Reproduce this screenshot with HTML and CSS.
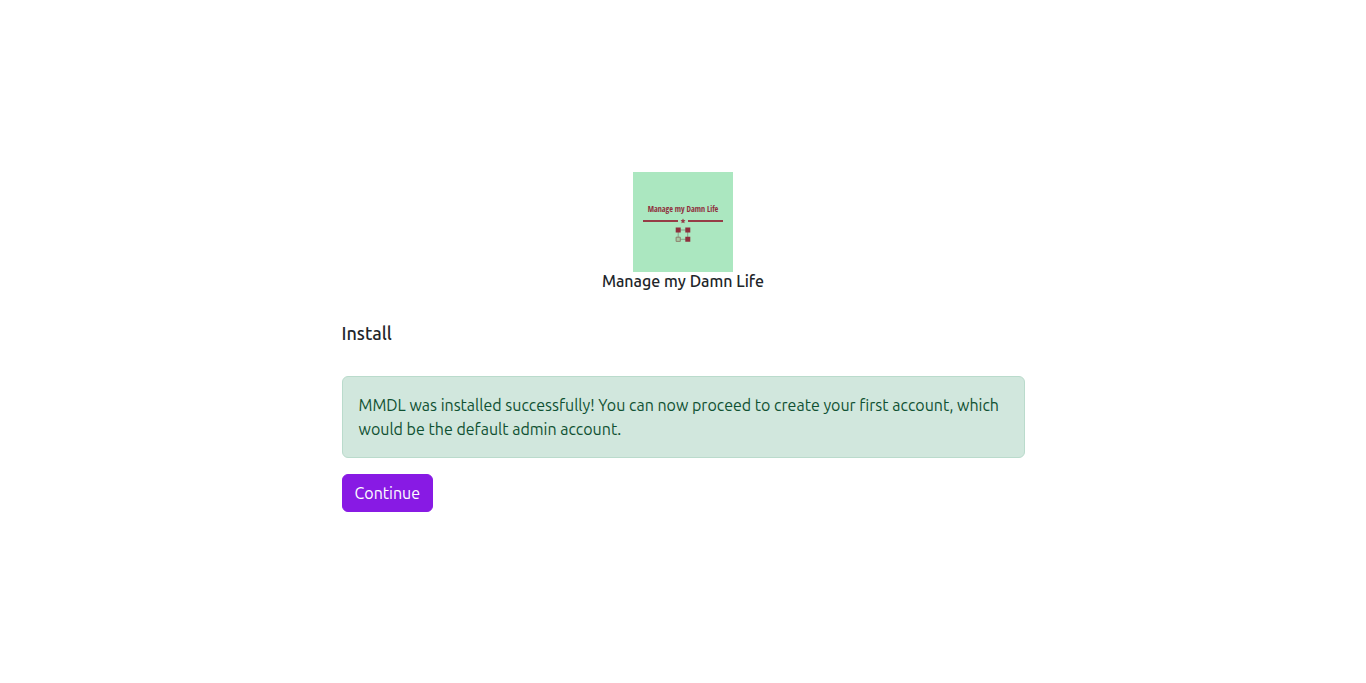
FILE: index.html
```html
<!DOCTYPE html>
<html lang="en">
<head>
<meta charset="utf-8">
<meta name="viewport" content="width=device-width, initial-scale=1">
<title>Manage my Damn Life</title>
<link rel="stylesheet" href="styles.css">
</head>
<body>
<main class="install">
  <header class="brand">
    <svg class="logo" viewBox="0 0 100 100" role="img" aria-label="Manage my Damn Life logo">
      <rect width="100" height="100" fill="#abe7c0"/>
      <text class="logo-text" x="50" y="40" text-anchor="middle">Manage my Damn Life</text>
      <path d="M10 49H45M55 49H90" stroke="#963c46" stroke-width="1.8"/>
      <path d="M50 46.500l.8 1.600 1.700.2-1.300 1.200.4 1.800-1.600-.9-1.600.9.4-1.800-1.300-1.200 1.700-.2z" fill="#963c46"/>
      <path d="M45.200 58H54.700V67.300H45.200Z" fill="none" stroke="#7c8f78" stroke-width=".8"/>
      <path d="M42.700 55.500h5v5h-5zM52.300 55.500h5v5h-5zM52.300 64.800h5v5h-5z" fill="#8f2f3c"/>
      <path d="M43.100 65.200h4.200v4.200h-4.200z" fill="#a9c9a4" stroke="#8b7868" stroke-width=".9"/>
    </svg>
    <h1 class="brand-name">Manage my Damn Life</h1>
  </header>
  <h2 class="page-title">Install</h2>
  <div class="alert" role="alert">MMDL was installed successfully! You can now proceed to create your first account, which would be the default admin account.</div>
  <button class="button" type="button">Continue</button>
</main>
</body>
</html>
```
FILE: styles.css
```css
* {
  box-sizing: border-box;
}

body {
  margin: 0;
  min-height: 100vh;
  padding-top: 1px;
  display: flex;
  align-items: center;
  justify-content: center;
  background: #fff;
  color: #212529;
  font: 16px/24px Ubuntu, "Noto Sans", sans-serif;
}

.install {
  width: 50%;
}

.brand {
  display: flex;
  flex-direction: column;
  align-items: center;
}

.logo {
  display: block;
  width: 100px;
  height: 100px;
}

.logo-text {
  fill: #8f2f3c;
  font: 700 8px "Ubuntu Condensed", "Open Sans Condensed", "Roboto Condensed", Ubuntu, sans-serif;
}

.brand-name {
  margin: 0;
  font-size: 16px;
  line-height: 19px;
  font-weight: 500;
}

.page-title {
  margin: 31px 0 32px;
  font-size: 18px;
  line-height: 22px;
  font-weight: 500;
}

.alert {
  margin-bottom: 16px;
  padding: 16px;
  border: 1px solid #badbcc;
  border-radius: 6px;
  background: #d1e7dd;
  color: #0f5132;
}

.button {
  display: block;
  padding: 6px 12px;
  border: 1px solid #881ae4;
  border-radius: 6px;
  background: #881ae4;
  color: #fff;
  font: inherit;
  cursor: pointer;
}
```
